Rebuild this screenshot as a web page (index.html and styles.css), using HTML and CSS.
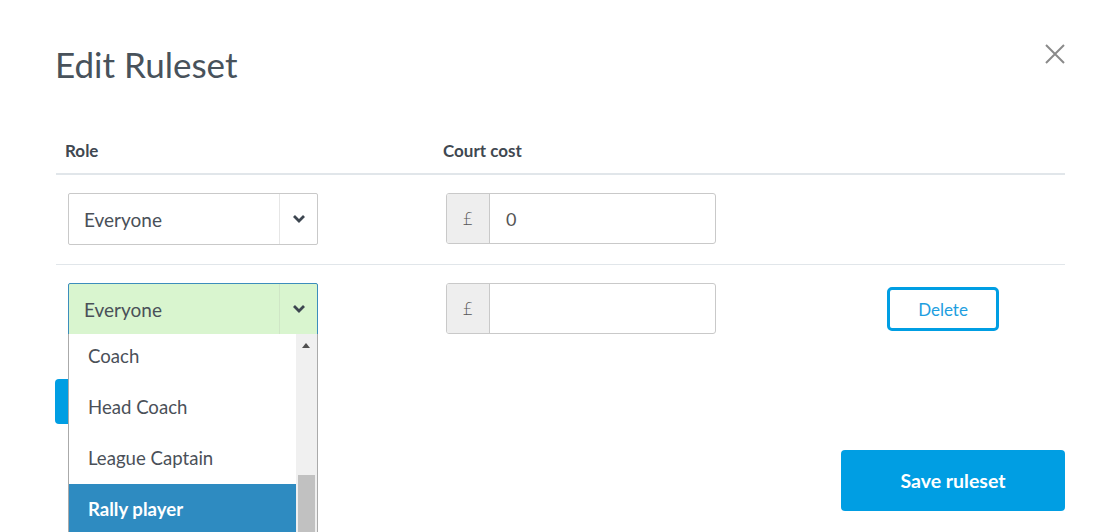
FILE: index.html
```html
<!DOCTYPE html>
<html>
<head>
<meta charset="utf-8">
<link rel="stylesheet" href="styles.css">
</head>
<body>
<div class="modal">
  <div class="modal-head">
    <h1 class="title">Edit Ruleset</h1>
    <button class="close" aria-label="Close">
      <svg width="20" height="20" viewBox="0 0 20 20"><path d="M1 1 L19 19 M19 1 L1 19" stroke="#8a8a8a" stroke-width="2" fill="none"/></svg>
    </button>
  </div>
  <div class="table">
    <div class="row head-row">
      <div class="th">Role</div>
      <div class="th">Court cost</div>
      <div class="th"></div>
    </div>
    <div class="row body-row">
      <div class="td">
        <div class="select">
          <span class="select-value">Everyone</span>
          <span class="select-arrow"><svg width="14" height="10" viewBox="0 0 14 10"><path d="M2 2 L7 7 L12 2" stroke="#3d4650" stroke-width="2.8" fill="none"/></svg></span>
        </div>
      </div>
      <div class="td">
        <div class="money"><span class="addon">£</span><span class="money-value">0</span></div>
      </div>
      <div class="td"></div>
    </div>
    <div class="row body-row last">
      <div class="td">
        <div class="select-wrap">
          <div class="select open">
            <span class="select-value">Everyone</span>
            <span class="select-arrow"><svg width="14" height="10" viewBox="0 0 14 10"><path d="M2 2 L7 7 L12 2" stroke="#3d4650" stroke-width="2.8" fill="none"/></svg></span>
          </div>
          <div class="dropdown">
            <ul class="options">
              <li>Coach</li>
              <li>Head Coach</li>
              <li>League Captain</li>
              <li class="active">Rally player</li>
            </ul>
            <div class="scrollbar">
              <span class="scroll-up"></span>
              <span class="thumb"></span>
            </div>
          </div>
        </div>
      </div>
      <div class="td">
        <div class="money"><span class="addon">£</span><span class="money-value"></span></div>
      </div>
      <div class="td">
        <button class="btn-outline">Delete</button>
      </div>
    </div>
  </div>
  <div class="actions">
    <button class="btn-add" aria-label="Add rule"></button>
    <button class="btn-save">Save ruleset</button>
  </div>
</div>
</body>
</html>
```

FILE: styles.css
```css
* { box-sizing: border-box; }
html, body { margin: 0; padding: 0; background: #fff; overflow: hidden; height: 532px; }
body { font-family: Lato, "Open Sans", sans-serif; color: #4a5058; }

.modal { padding: 0 48px 0 56px; }

.modal-head { display: flex; justify-content: space-between; align-items: flex-start; height: 108px; }
.title { margin: 42px 0 0 -1px; font-size: 35px; font-weight: 400; color: #48525b; line-height: 44px; }
.close { margin: 44px -2px 0 0; padding: 0; background: none; border: 0; width: 24px; height: 22px; }

.row { display: grid; grid-template-columns: 378px 453px 1fr; }
.head-row { height: 67px; border-bottom: 2px solid #e1e6ea; align-items: end; padding-bottom: 12px; }
.th { padding-left: 9px; font-size: 17px; font-weight: 700; color: #3f4851; line-height: 20px; }

.body-row { border-bottom: 1px solid #e1e6ea; padding: 18px 0 19px; }
.body-row.last { border-bottom: 0; }
.td { padding-left: 12px; }

.select-wrap { position: relative; width: 250px; }
.select { width: 250px; height: 52px; border: 1px solid #c9c9c9; border-radius: 2px; display: flex; align-items: center; background: #fff; }
.select.open { background: #d9f5cf; border-color: #3c8dbc; border-bottom-left-radius: 0; border-bottom-right-radius: 0; }
.select-value { flex: 1; padding-left: 15px; font-size: 19px; color: #4a5058; }
.select-arrow { width: 38px; height: 100%; border-left: 1px solid #e6e6e6; display: flex; align-items: center; justify-content: center; }
.select.open .select-arrow { border-left-color: #cfe6c6; }

.dropdown { position: absolute; top: 51px; left: 0; width: 250px; height: 200px; background: #fff; border: 1px solid #aaa; border-top: 0; border-bottom: 0; display: flex; overflow: hidden; z-index: 5; }
.options { list-style: none; margin: 0; padding: 0; flex: 1; }
.options li { height: 51px; line-height: 50px; padding-left: 19px; font-size: 18.6px; color: #4a5058; }
.options li:first-child { height: 48px; line-height: 44px; }
.options li.active { background: #2e8bc1; color: #fff; font-weight: 700; }
.scrollbar { width: 21px; background: #f0f0f0; position: relative; }
.scroll-up { position: absolute; top: 9px; left: 6px; width: 0; height: 0; border-left: 4px solid transparent; border-right: 4px solid transparent; border-bottom: 5px solid #505050; }
.thumb { position: absolute; top: 141px; left: 2px; width: 17px; height: 120px; background: #c1c1c1; }

.money { display: flex; width: 270px; height: 51px; border: 1px solid #c9c9c9; border-radius: 3px; overflow: hidden; }
.addon { width: 43px; background: #eeeeee; border-right: 1px solid #c9c9c9; display: flex; align-items: center; justify-content: center; font-size: 17px; color: #555; font-family: "DejaVu Sans", sans-serif; font-weight: 300; }
.money-value { flex: 1; display: flex; align-items: center; padding-left: 16px; font-size: 18px; color: #555; }

.btn-outline { margin: 4px 0 0 -12px; width: 112px; height: 44px; border: 3px solid #009ee3; border-radius: 5px; background: #fff; color: #1d9ee0; font-family: Lato, sans-serif; font-size: 17px; padding: 0; }

.actions { display: flex; justify-content: space-between; align-items: flex-start; margin-top: 25px; position: relative; }
.btn-add { margin-top: 0; width: 120px; height: 45px; background: #009ee3; color: #fff; border: 0; border-radius: 4px; margin-left: -1px; }
.btn-save { margin-top: 71px; width: 224px; height: 61px; background: #009ee3; color: #fff; border: 0; border-radius: 4px; font-family: Lato, sans-serif; font-size: 19.5px; font-weight: 700; }
```
